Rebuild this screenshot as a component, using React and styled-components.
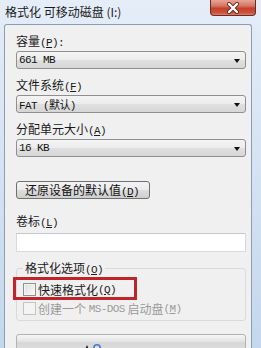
import React from 'react'
import styled, { createGlobalStyle } from 'styled-components'

const GlobalStyle = createGlobalStyle`
  html, body { margin:0; padding:0; }
  body { width:261px; height:348px; overflow:hidden; font-family:"Noto Sans CJK SC", sans-serif; }
`

const Window = styled.div`
  position:relative;
  width:261px;
  height:348px;
  overflow:hidden;
  background:linear-gradient(#e4edf8, #c4d7ee);
  display:flex;
  flex-direction:column;
`

const TitleBar = styled.div`
  height:24px;
  flex:none;
  display:flex;
  justify-content:space-between;
  align-items:flex-start;
  padding:0 5px;
`

const Title = styled.div`
  font-size:12px;
  line-height:24px;
  color:#1b1b1b;
  white-space:pre;
`

const CloseButton = styled.div`
  width:46px;
  height:16px;
  box-sizing:border-box;
  border:1px solid #6b2a22;
  border-top:none;
  border-radius:0 0 4px 4px;
  background:linear-gradient(#e8a596 0%, #d67563 40%, #c4412c 55%, #cb533b 85%, #da826b 100%);
  display:flex;
  align-items:center;
  justify-content:center;
`

const Panel = styled.div`
  flex:1;
  margin:0 9px 0 4px;
  background:#f0f0f0;
  border:1px solid #8d9eb2;
  border-bottom:none;
  border-radius:3px 3px 0 0;
  padding:8px 5px 0 11px;
  display:flex;
  flex-direction:column;
`

const Label = styled.div`
  height:16px;
  line-height:16px;
  font-size:12px;
  color:#1a1a1a;
  margin-top:${p => p.$top || 0}px;
  white-space:pre;
`

const Key = styled.span`
  font-family:"Liberation Mono", monospace;
  font-size:11px;
  letter-spacing:-0.6px;
  text-decoration:underline;
`

const Paren = styled.span`
  font-family:"Liberation Mono", monospace;
  font-size:11px;
  letter-spacing:-0.6px;
`

const Select = styled.div`
  margin-top:2px;
  height:18px;
  box-sizing:border-box;
  border:1px solid #8f8f8f;
  border-radius:3px;
  background:linear-gradient(#f4f4f4 0%, #ececec 50%, #e0e0e0 51%, #d6d6d6 100%);
  display:flex;
  align-items:center;
  justify-content:space-between;
  padding:0 5px 0 2px;
  font-family:"Liberation Mono", "Noto Sans CJK SC", monospace;
  font-size:11px;
  letter-spacing:-0.6px;
  color:#111;
  white-space:pre;
`

const Arrow = styled.div`
  width:0;
  height:0;
  border-left:3.5px solid transparent;
  border-right:3.5px solid transparent;
  border-top:4px solid #111;
  margin-top:2px;
`

const Button = styled.div`
  align-self:flex-start;
  margin-top:24px;
  width:134px;
  height:18px;
  box-sizing:border-box;
  border:1px solid #707070;
  border-radius:3px;
  background:linear-gradient(#f3f3f3 0%, #ebebeb 50%, #dddddd 51%, #cfcfcf 100%);
  font-size:12px;
  line-height:16px;
  padding-left:8px;
  color:#111;
  white-space:pre;
`

const TextInput = styled.div`
  margin-top:4px;
  height:19px;
  box-sizing:border-box;
  background:#fff;
  border:1px solid #d6d9dd;
  border-top-color:#c4c7cc;
`

const Group = styled.fieldset`
  margin:8px 0 0 0;
  padding:4px 0 2px 6px;
  border:1px solid #d5dbe0;
  border-radius:3px;
  min-width:0;
`

const Legend = styled.legend`
  padding:0 2px;
  margin-left:0;
  height:16px;
  line-height:16px;
  font-size:12px;
  color:#1a1a1a;
`

const Row = styled.div`
  position:relative;
  display:flex;
  align-items:center;
  height:19px;
  font-size:12px;
  color:${p => (p.$disabled ? '#9a9a9a' : '#1a1a1a')};
  white-space:pre;
`

const Box = styled.span`
  width:13px;
  height:13px;
  box-sizing:border-box;
  margin-right:2px;
  border:1px solid ${p => (p.$disabled ? '#c4c4c4' : '#8e8f8f')};
  background:${p => (p.$disabled ? '#f4f4f4' : 'linear-gradient(135deg, #dcdcdc, #fbfbfb)')};
  box-shadow:inset 0 0 0 1px #f4f4f4;
`

const Highlight = styled.div`
  position:absolute;
  left:-10px;
  top:-3px;
  width:124px;
  height:23px;
  box-sizing:border-box;
  border:3px solid #bf242b;
  pointer-events:none;
`

const Mono = styled.span`
  font-family:"Liberation Mono", monospace;
  font-size:11px;
  letter-spacing:-0.6px;
`

const Progress = styled.div`
  margin-top:13px;
  height:16px;
  flex:none;
  box-sizing:border-box;
  border:1px solid #b2b2b2;
  border-radius:3px;
  background:linear-gradient(#f6f6f6 0%, #e4e4e4 45%, #d6d6d6 55%, #dcdcdc 100%);
`

const Cursor = styled.svg`
  position:absolute;
  left:84px;
  top:342px;
`

const Mn = ({ k }) => (
  <>
    <Paren>(</Paren>
    <Key>{k}</Key>
    <Paren>)</Paren>
  </>
)

const App = () => {
  return (
    <Window>
      <GlobalStyle />
      <TitleBar>
        <Title>格式化 可移动磁盘 (I:)</Title>
        <CloseButton>
          <svg width="14" height="12" viewBox="0 0 14 12">
            <path d="M3 2 L11 10 M11 2 L3 10" stroke="#5a2a22" strokeWidth="4" strokeLinecap="round" />
            <path d="M3 2 L11 10 M11 2 L3 10" stroke="#fff" strokeWidth="2.4" strokeLinecap="round" />
          </svg>
        </CloseButton>
      </TitleBar>
      <Panel>
        <Label>容量<Mn k="P" /><Paren>:</Paren></Label>
        <Select>
          <span>661 MB</span>
          <Arrow />
        </Select>
        <Label $top={8}>文件系统<Mn k="F" /></Label>
        <Select>
          <span>FAT (默认)</span>
          <Arrow />
        </Select>
        <Label $top={8}>分配单元大小<Mn k="A" /></Label>
        <Select>
          <span>16 KB</span>
          <Arrow />
        </Select>
        <Button>还原设备的默认值<Mn k="D" /></Button>
        <Label $top={14}>卷标<Mn k="L" /></Label>
        <TextInput />
        <Group>
          <Legend>格式化选项<Mn k="O" /></Legend>
          <Row>
            <Highlight />
            <Box />
            快速格式化<Mn k="Q" />
          </Row>
          <Row $disabled>
            <Box $disabled />
            创建一个 <Mono>MS-DOS</Mono> 启动盘<Mn k="M" />
          </Row>
        </Group>
        <Progress />
      </Panel>
      <Cursor width="18" height="8" viewBox="0 0 18 8">
        <path d="M1 8 L3 3 L5 8 Z" fill="#111" />
        <circle cx="13" cy="6" r="3.2" fill="none" stroke="#3b7fd4" strokeWidth="1.6" />
      </Cursor>
    </Window>
  )
}

export default App
